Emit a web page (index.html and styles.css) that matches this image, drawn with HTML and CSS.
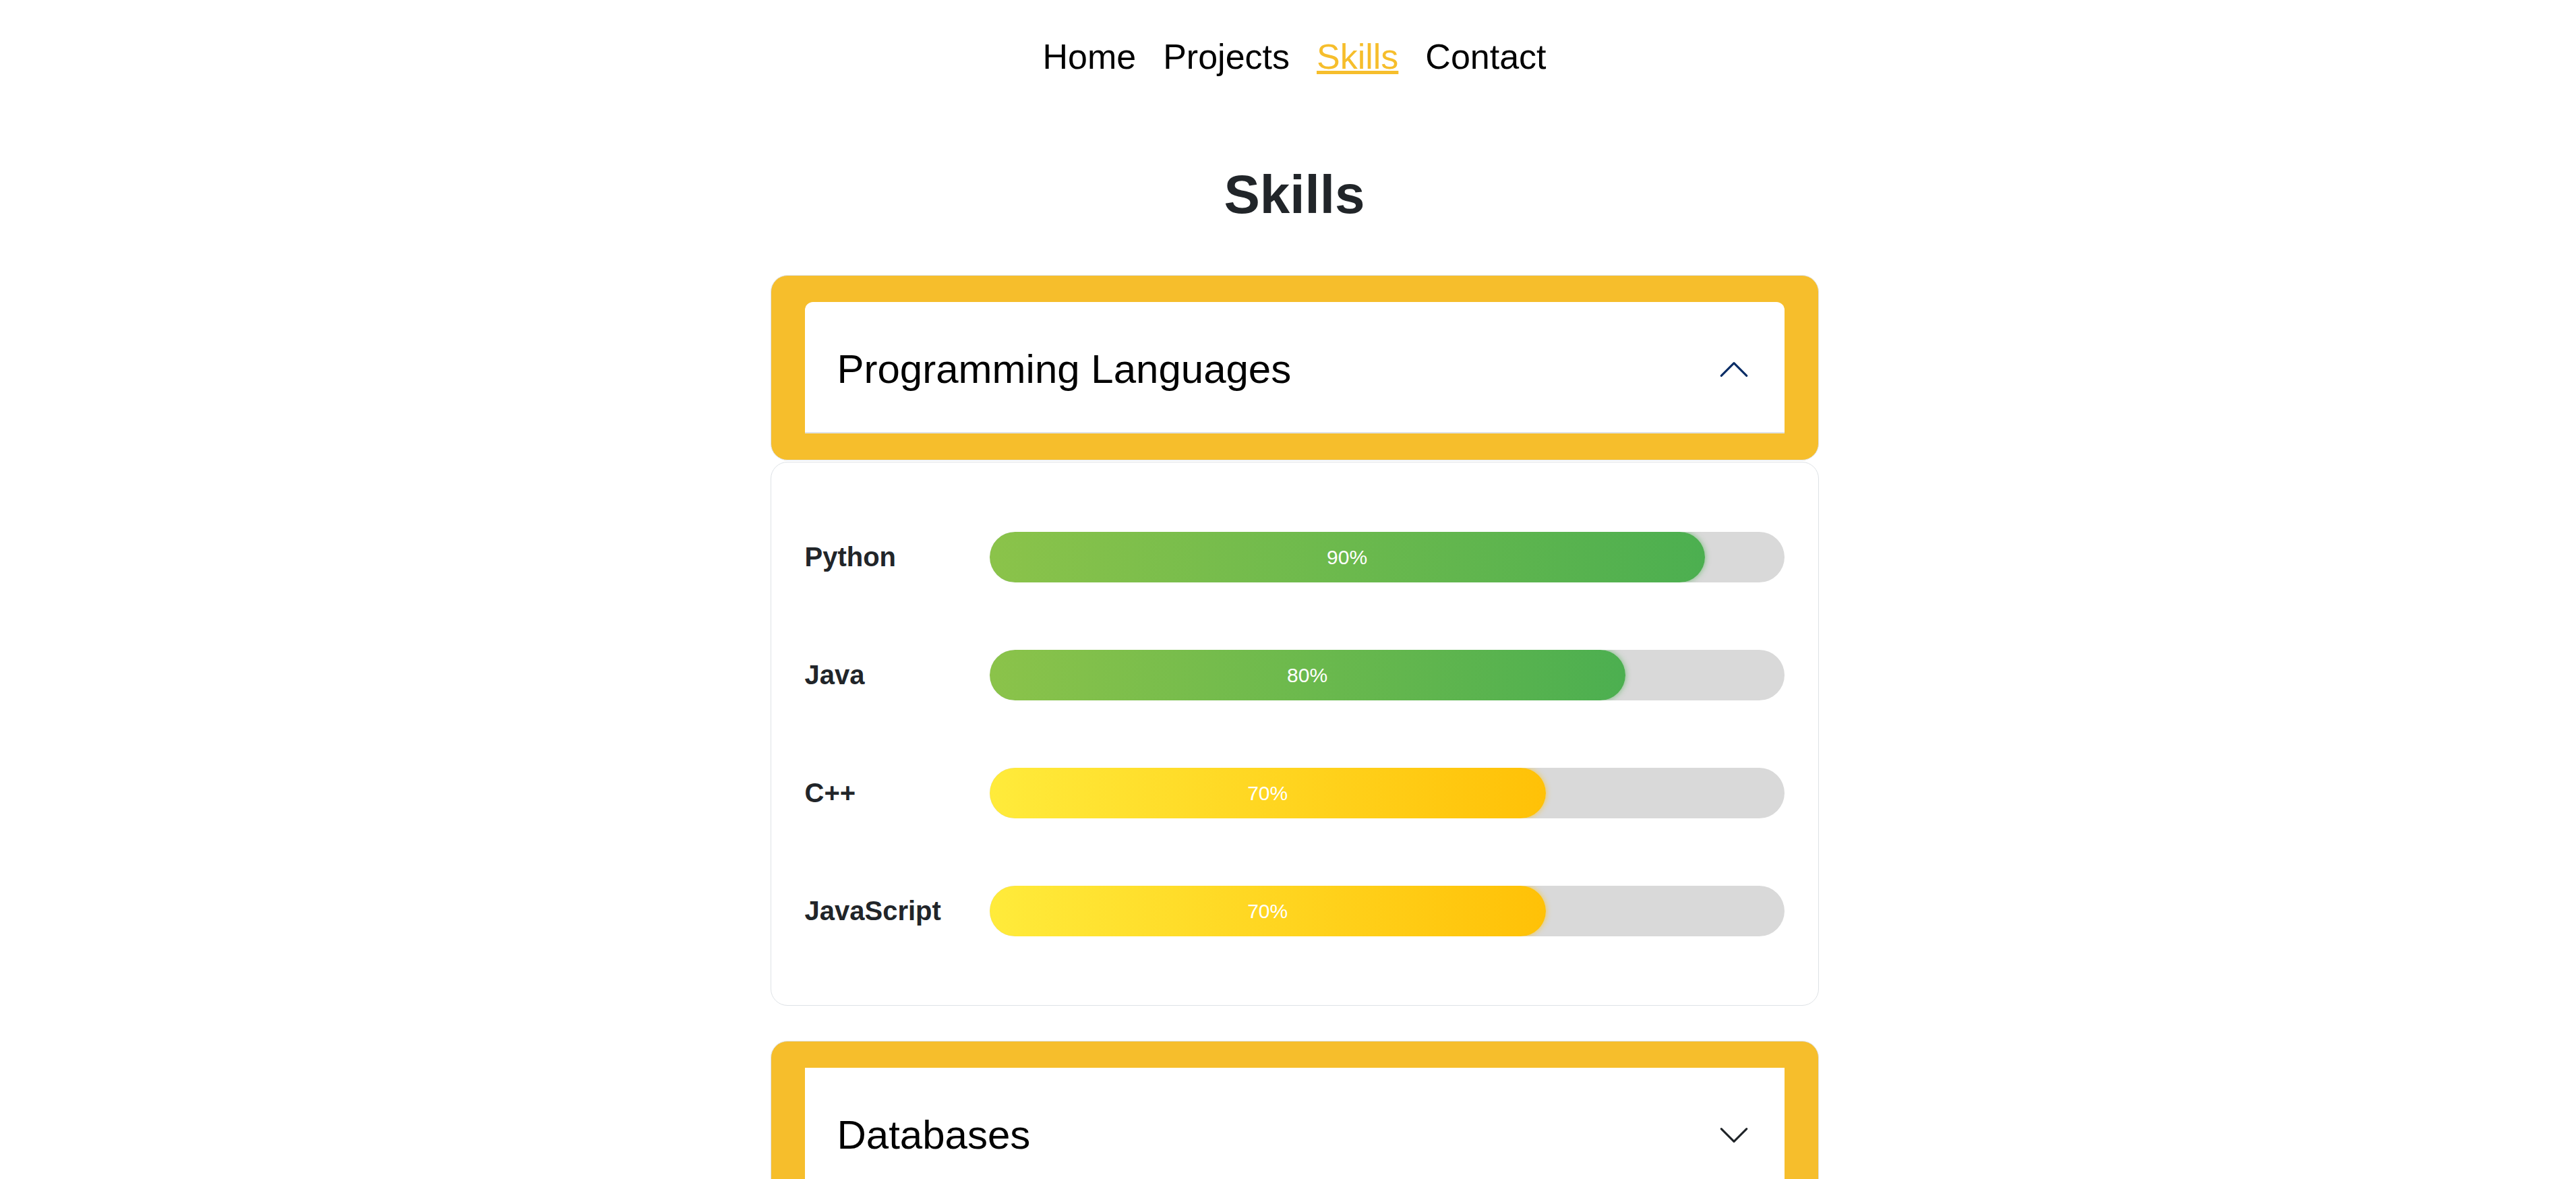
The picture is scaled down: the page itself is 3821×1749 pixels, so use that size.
FILE: index.html
```html
<!DOCTYPE html>
<html lang="en">
<head>
<meta charset="utf-8">
<title>Skills</title>
<link rel="stylesheet" href="styles.css">
</head>
<body>
  <nav class="nav">
    <a class="nav-link" href="#">Home</a>
    <a class="nav-link" href="#">Projects</a>
    <a class="nav-link active" href="#">Skills</a>
    <a class="nav-link" href="#">Contact</a>
  </nav>

  <h1 class="page-title">Skills</h1>

  <section class="accordion">
    <div class="acc-header">
      <button class="acc-btn open" type="button">
        <span class="acc-title">Programming Languages</span>
        <svg class="chev chev-up" viewBox="0 0 16 16" fill="none" stroke-linecap="round" stroke-linejoin="round"><path d="M2 11L8 5L14 11"/></svg>
      </button>
    </div>
    <div class="acc-body">
      <div class="skill">
        <span class="skill-name">Python</span>
        <div class="track"><div class="fill green" style="width:90%"><span>90%</span></div></div>
      </div>
      <div class="skill">
        <span class="skill-name">Java</span>
        <div class="track"><div class="fill green" style="width:80%"><span>80%</span></div></div>
      </div>
      <div class="skill">
        <span class="skill-name">C++</span>
        <div class="track"><div class="fill yellow" style="width:70%"><span>70%</span></div></div>
      </div>
      <div class="skill">
        <span class="skill-name">JavaScript</span>
        <div class="track"><div class="fill yellow" style="width:70%"><span>70%</span></div></div>
      </div>
    </div>

    <div class="acc-header next">
      <button class="acc-btn" type="button">
        <span class="acc-title">Databases</span>
        <svg class="chev chev-down" viewBox="0 0 16 16" fill="none" stroke-linecap="round" stroke-linejoin="round"><path d="M2 5L8 11L14 5"/></svg>
      </button>
    </div>
  </section>
</body>
</html>
```
FILE: styles.css
```css
* {
  box-sizing: border-box;
}

html {
  background: #ffffff;
}

body {
  margin: 0;
  padding: 0 0 60px 19px;
  font-family: "Liberation Sans", Arial, Helvetica, sans-serif;
  color: #212529;
  background: #ffffff;
}

.nav {
  display: flex;
  justify-content: center;
  gap: 40px;
  padding-top: 53px;
  font-size: 52px;
  line-height: 62px;
}

.nav-link {
  color: #000000;
  text-decoration: none;
}

.nav-link.active {
  color: #f6be2c;
  text-decoration: underline;
  text-decoration-color: #f6be2c;
}

.page-title {
  margin: 126px 0 0;
  text-align: center;
  font-size: 80px;
  line-height: 96px;
  font-weight: 700;
  color: #212529;
}

.accordion {
  width: 1555px;
  margin: 71px auto 0;
}

.acc-header {
  background: #f6be2c;
  border: 1px solid #dee2e6;
  border-radius: 25px;
  padding: 39px 50px;
}

.acc-header.next {
  margin-top: 52px;
}

.acc-btn {
  display: flex;
  align-items: center;
  width: 100%;
  margin: 0;
  border: 0;
  background: #ffffff;
  padding: 55px 50px 50px 48px;
  font-family: inherit;
  font-size: 60px;
  line-height: 90px;
  color: #000000;
  text-align: left;
  box-shadow: inset 0 -2px 0 #dee2e6;
  cursor: pointer;
}

.acc-btn.open {
  border-radius: 12px 12px 0 0;
}

.acc-title {
  flex: 1;
}

.chev {
  width: 50px;
  height: 50px;
  flex-shrink: 0;
  stroke-width: 1;
}

.chev-up {
  stroke: #052c65;
}

.chev-down {
  stroke: #212529;
}

.acc-body {
  margin-top: 2px;
  border: 1px solid #dee2e6;
  border-radius: 25px;
  padding: 103px 50px 102px;
  display: flex;
  flex-direction: column;
  gap: 100px;
}

.skill {
  display: grid;
  grid-template-columns: 274px 1fr;
  align-items: center;
  height: 75px;
}

.skill-name {
  font-size: 40px;
  font-weight: 700;
  color: #212529;
}

.track {
  height: 75px;
  border-radius: 38px;
  background: #d9d9d9;
  overflow: hidden;
}

.fill {
  height: 100%;
  border-radius: 38px;
  display: flex;
  align-items: center;
  justify-content: center;
  color: #ffffff;
  font-size: 30px;
}

.fill.green {
  background: linear-gradient(90deg, #8bc34a, #4caf50);
  box-shadow: 0 0 9px rgba(76, 175, 80, 0.7);
}

.fill.yellow {
  background: linear-gradient(90deg, #ffeb3b, #ffc107);
  box-shadow: 0 0 9px rgba(255, 193, 7, 0.7);
}
```
